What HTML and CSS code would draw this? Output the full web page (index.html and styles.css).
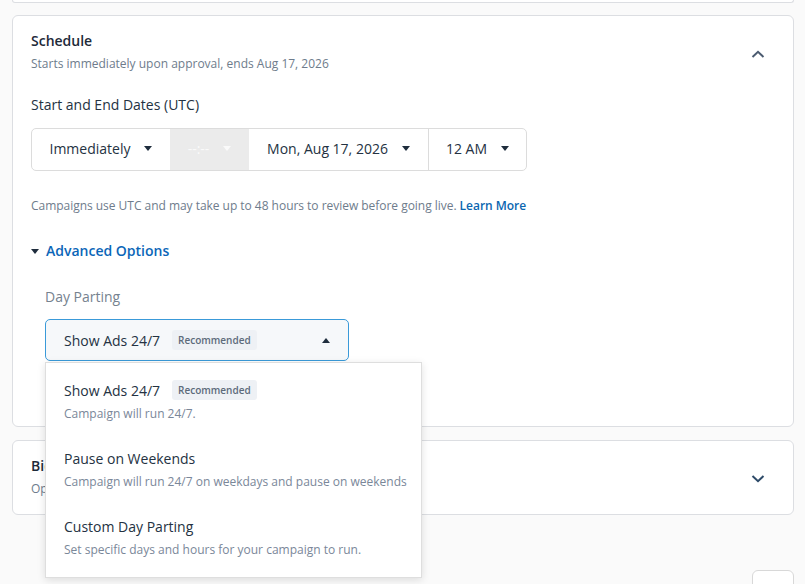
FILE: index.html
```html
<!DOCTYPE html>
<html lang="en">
<head>
    <meta charset="UTF-8">
    <meta name="viewport" content="width=device-width, initial-scale=1.0">
    <title>Campaign Settings</title>
    <link rel="stylesheet" href="styles.css">
</head>
<body>
    <div class="page">
        <div class="card card-tail"></div>

        <div class="card">
            <div class="card-head">
                <div>
                    <div class="card-title">Schedule</div>
                    <div class="card-sub">Starts immediately upon approval, ends Aug 17, 2026</div>
                </div>
                <svg class="chevron" width="14" height="8" viewBox="0 0 14 8"><path d="M1.5 7 L7 1.8 L12.5 7" fill="none" stroke="#4b5b70" stroke-width="2"/></svg>
            </div>

            <div class="card-body">
                <div class="field-label">Start and End Dates (UTC)</div>
                <div class="date-group">
                    <div class="seg seg-start">Immediately <span class="caret"></span></div>
                    <div class="seg seg-off">--:-- <span class="caret caret-light"></span></div>
                    <div class="seg seg-end">Mon, Aug 17, 2026 <span class="caret"></span></div>
                    <div class="seg seg-time">12 AM <span class="caret"></span></div>
                </div>
                <p class="hint">Campaigns use UTC and may take up to 48 hours to review before going live. <a href="#">Learn More</a></p>

                <div class="adv-toggle"><span class="caret"></span> Advanced Options</div>

                <div class="adv">
                    <div class="field-label muted">Day Parting</div>
                    <div class="select-wrap">
                        <div class="select open">
                            <span>Show Ads 24/7</span>
                            <span class="badge">Recommended</span>
                            <span class="caret caret-up"></span>
                        </div>
                        <ul class="menu">
                            <li>
                                <div class="opt-title"><span>Show Ads 24/7</span><span class="badge">Recommended</span></div>
                                <div class="opt-desc">Campaign will run 24/7.</div>
                            </li>
                            <li>
                                <div class="opt-title">Pause on Weekends</div>
                                <div class="opt-desc">Campaign will run 24/7 on weekdays and pause on weekends</div>
                            </li>
                            <li>
                                <div class="opt-title">Custom Day Parting</div>
                                <div class="opt-desc">Set specific days and hours for your campaign to run.</div>
                            </li>
                        </ul>
                    </div>
                </div>
            </div>
        </div>

        <div class="card">
            <div class="card-head card-head-closed">
                <div>
                    <div class="card-title">Bidding</div>
                    <div class="card-sub">Optimized for conversions</div>
                </div>
                <svg class="chevron" width="14" height="8" viewBox="0 0 14 8"><path d="M1.5 1 L7 6.2 L12.5 1" fill="none" stroke="#2d4a68" stroke-width="2"/></svg>
            </div>
        </div>

        <div class="footer">
            <span class="back">‹</span>
            <button class="btn"></button>
        </div>
    </div>
</body>
</html>
```

FILE: styles.css
```css
body {
    margin: 0;
    background-color: #fafafa;
    font-family: "Open Sans", "Noto Sans", sans-serif;
    color: #243242;
    overflow: hidden;
}
.page {
    padding: 0 11px 0 12px;
}
.card {
    background: white;
    border: 1px solid #dcdee2;
    border-radius: 6px;
    margin-bottom: 13px;
}
.card-tail {
    height: 2px;
    border-top: none;
    border-radius: 0 0 6px 6px;
    margin-bottom: 12px;
}
.card-head {
    display: flex;
    justify-content: space-between;
    align-items: center;
    padding: 15px 28px 15px 18px;
}
.card-head-closed {
    padding-bottom: 16px;
}
.card-title {
    font-size: 14px;
    line-height: 20px;
    font-weight: 600;
    color: #1d2a39;
}
.card-sub {
    font-size: 12px;
    line-height: 18px;
    margin-top: 4px;
    color: #6e7c8c;
}
.chevron {
    margin-top: 4px;
}
.card-body {
    padding: 7px 18px 65px;
}
.field-label {
    font-size: 14px;
    line-height: 20px;
    color: #243242;
}
.muted {
    color: #76828f;
}

/* date + time picker row */
.date-group {
    display: inline-flex;
    margin-top: 13px;
    height: 41px;
    border: 1px solid #dcdcdc;
    border-radius: 5px;
    overflow: hidden;
}
.seg {
    display: flex;
    align-items: center;
    justify-content: center;
    gap: 14px;
    padding-bottom: 2px;
    box-sizing: border-box;
    font-size: 14px;
    color: #243242;
}
.seg-start { width: 138px; }
.seg-off {
    width: 79px;
    background: #ebebeb;
    color: #fafafa;
}
.seg-end { width: 179px; }
.seg-time {
    width: 98px;
    border-left: 1px solid #dcdcdc;
}

.caret {
    display: inline-block;
    width: 0;
    height: 0;
    border-left: 4.5px solid transparent;
    border-right: 4.5px solid transparent;
    border-top: 5px solid #1f2d3d;
}
.caret-light { border-top-color: #fafafa; }
.caret-up {
    border-top: none;
    border-bottom: 5px solid #1f2d3d;
}

.hint {
    margin: 26px 0 0;
    font-size: 12px;
    line-height: 18px;
    letter-spacing: -0.03px;
    color: #6e7c8c;
}
.hint a {
    color: #0b66b0;
    font-weight: 600;
    text-decoration: none;
}
.adv-toggle {
    display: flex;
    align-items: center;
    gap: 7px;
    margin-top: 26px;
    font-size: 14px;
    line-height: 20px;
    font-weight: 600;
    color: #0b66b8;
}
.adv {
    padding-left: 14px;
    margin-top: 26px;
}

/* day parting select and its open list */
.select-wrap {
    position: relative;
    width: 304px;
    margin-top: 12px;
}
.select {
    display: flex;
    align-items: center;
    height: 42px;
    box-sizing: border-box;
    padding: 0 18px;
    border: 1px solid #3a9ad9;
    border-radius: 5px;
    background: #f6f8fa;
    font-size: 14px;
}
.select .caret-up {
    margin-left: auto;
}
.badge {
    display: inline-block;
    margin-left: 12px;
    padding: 0 6px;
    line-height: 20px;
    font-size: 10px;
    font-weight: 600;
    color: #5d6b7b;
    background: #eef1f5;
    border-radius: 3px;
}
.menu {
    position: absolute;
    top: 43px;
    left: 0;
    width: 377px;
    box-sizing: border-box;
    margin: 0;
    padding: 4px 0 6px;
    list-style: none;
    background: white;
    border: 1px solid #dedede;
    box-shadow: 0 2px 8px rgba(0,0,0,0.12);
    z-index: 2;
}
.menu li {
    height: 68px;
    box-sizing: border-box;
    padding: 13px 18px 0;
}
.opt-title {
    display: flex;
    align-items: center;
    height: 20px;
    font-size: 14px;
    color: #243242;
}
.opt-desc {
    margin-top: 5px;
    font-size: 12px;
    line-height: 18px;
    white-space: nowrap;
    color: #7a8799;
}

.footer {
    display: flex;
    justify-content: space-between;
    align-items: flex-start;
    margin-top: 55px;
}
.back {
    margin: 8px 0 0 6px;
    font-size: 20px;
    line-height: 20px;
    color: #243242;
}
.btn {
    width: 42px;
    height: 40px;
    background: white;
    border: 1px solid #d8d8d8;
    border-radius: 6px;
}
```
